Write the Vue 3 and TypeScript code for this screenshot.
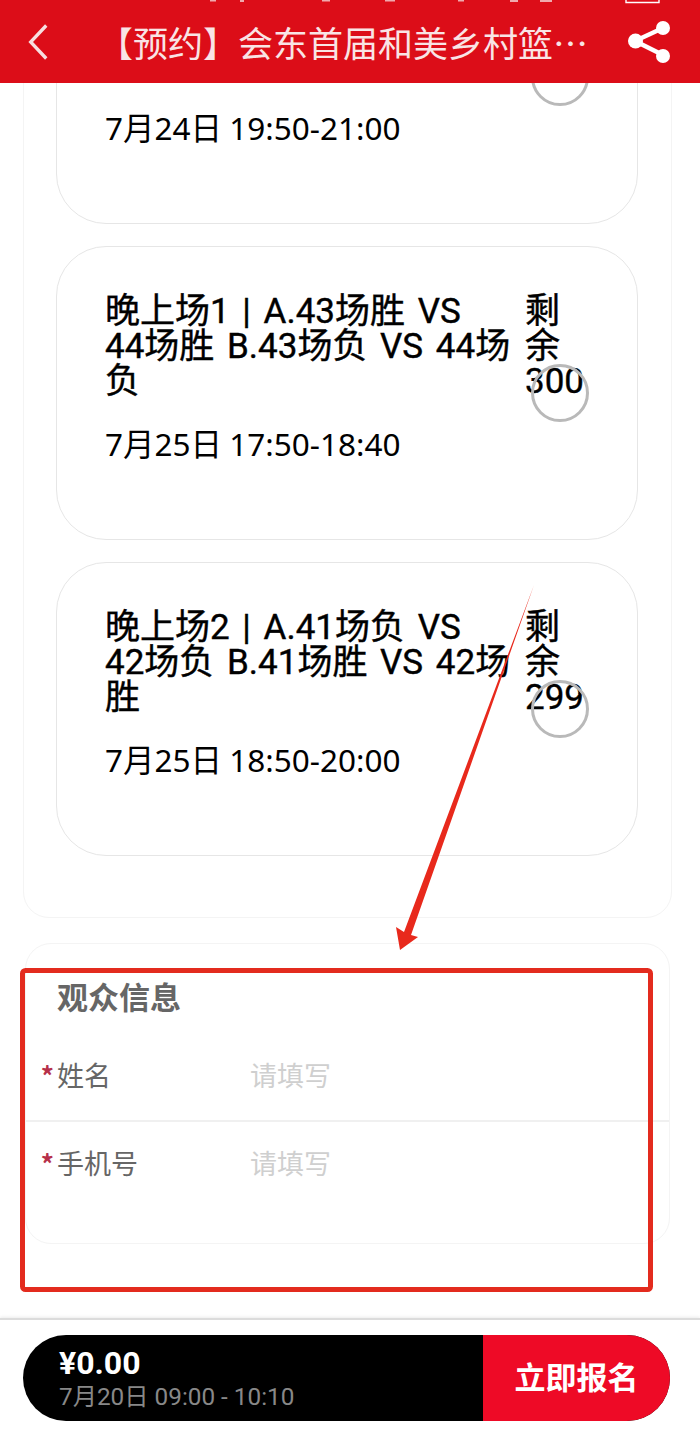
<script setup lang="ts">
interface Session {
  id: number
  title: string
  date: string
  left: string
}

const sessions: Session[] = [
  { id: 1, title: '', date: '7月24日 19:50-21:00', left: '' },
  { id: 2, title: '晚上场1 | A.43场胜 VS 44场胜 B.43场负 VS 44场负', date: '7月25日 17:50-18:40', left: '剩余300' },
  { id: 3, title: '晚上场2 | A.41场负 VS 42场负 B.41场胜 VS 42场胜', date: '7月25日 18:50-20:00', left: '剩余299' }
]

const fields = ['姓名', '手机号']
</script>

<template>
  <div class="page">
    <header class="nav">
      <svg class="status" viewBox="0 0 700 4" aria-hidden="true">
        <path d="M210 0h6v1.500h-6zM240 0h4v2h-4zM322 0h8v1.500h-8zM385 0h10v1.500h-10zM458 0h6v1.500h-6zM510 0h8v2h-8zM540 0h12v2h-12z" fill="#f0a9ad" />
        <path d="M626 0v2.500h33v-2.500" fill="none" stroke="#fff" stroke-width="1.400" />
      </svg>
      <svg class="back" viewBox="0 0 24 42" aria-hidden="true">
        <path d="M21 3 4 21l17 18" fill="none" stroke="#f7dfe0" stroke-width="3.600" />
      </svg>
      <h1 class="nav-title">【预约】会东首届和美乡村篮球赛观赛预约</h1>
      <svg class="share" viewBox="0 0 42 44" aria-hidden="true">
        <g fill="#fff" stroke="#fff">
          <path d="M35 8 7 21l28 14" fill="none" stroke-width="4.500" />
          <circle cx="35" cy="8" r="7" stroke="none" />
          <circle cx="7.500" cy="21" r="7.500" stroke="none" />
          <circle cx="35" cy="36" r="7" stroke="none" />
        </g>
      </svg>
    </header>

    <main class="content">
      <section class="sessions">
        <article v-for="s in sessions" :key="s.id" class="session">
          <div class="session-main">
            <div class="session-title">{{ s.title }}</div>
            <div class="session-date">{{ s.date }}</div>
          </div>
          <div class="session-left">{{ s.left }}</div>
          <span class="ring"></span>
        </article>
      </section>

      <section class="audience">
        <h2 class="audience-title">观众信息</h2>
        <div v-for="f in fields" :key="f" class="field">
          <span class="star">*</span>
          <span class="field-label">{{ f }}</span>
          <span class="field-input">请填写</span>
        </div>
      </section>
    </main>

    <footer class="bottom">
      <div class="bar">
        <div class="price">
          <div class="amount">¥0.00</div>
          <div class="time">7月20日 09:00 - 10:10</div>
        </div>
        <div class="action">立即报名</div>
      </div>
    </footer>

    <svg class="mark" viewBox="0 0 700 1431" aria-hidden="true">
      <polygon points="534,585 411,935 418,937 400,950 396,927 404,932" fill="#e8291c" />
      <rect x="22.500" y="970.500" width="628" height="319" rx="3" fill="none" stroke="#e32b1e" stroke-width="5" />
    </svg>
  </div>
</template>

<style>
html,
body {
  margin: 0;
  background: #fff;
}
</style>

<style scoped>
.page {
  position: relative;
  width: 700px;
  height: 1431px;
  overflow: hidden;
  background: #fff;
  font-family: "Roboto", "Noto Sans CJK SC", sans-serif;
  color: #000;
}

.nav {
  position: relative;
  z-index: 2;
  height: 83px;
  display: flex;
  align-items: center;
  padding: 0 30px 0 27px;
  box-sizing: border-box;
  background: #dc0d18;
  color: #f9e4e5;
}

.status {
  position: absolute;
  left: 0;
  top: 0;
  width: 700px;
  height: 4px;
}

.back {
  width: 22px;
  height: 40px;
  flex: none;
}

.nav-title {
  width: 494px;
  margin: 0 0 0 49px;
  font-family: "Noto Sans CJK SC", sans-serif;
  font-size: 35px;
  line-height: 42px;
  font-weight: 400;
  white-space: nowrap;
  overflow: hidden;
  text-overflow: ellipsis;
}

.share {
  width: 42px;
  height: 44px;
  flex: none;
  margin-left: auto;
}

.content {
  height: 1235px;
  overflow: hidden;
}

.sessions {
  display: flex;
  flex-direction: column;
  gap: 22px;
  box-sizing: border-box;
  width: 649px;
  margin: -184px 0 0 23px;
  padding: 30px 33px 61px 32px;
  border: 1px solid #f4f4f4;
  border-radius: 26px;
}

.session {
  position: relative;
  display: flex;
  gap: 14px;
  height: 294px;
  box-sizing: border-box;
  padding: 47px 0 0 48px;
  border: 1px solid #e6e6e6;
  border-radius: 50px;
  background: #fff;
}

.session-main {
  width: 406px;
  flex: none;
}

.session-title {
  min-height: 105px;
  font-size: 35px;
  line-height: 35px;
  font-weight: 400;
  word-spacing: 4px;
  -webkit-text-stroke: 0.4px #000;
}

.session-date {
  margin-top: 27px;
  font-family: "Noto Sans", "Noto Sans CJK SC", sans-serif;
  font-size: 31.500px;
  line-height: 36px;
  word-spacing: -1px;
}

.session-left {
  width: 34px;
  font-size: 35px;
  line-height: 35px;
  font-weight: 400;
  -webkit-text-stroke: 0.4px #000;
}

.ring {
  position: absolute;
  right: 48px;
  top: 50%;
  width: 58px;
  height: 58px;
  box-sizing: border-box;
  margin-top: -29px;
  border: 3px solid #b9b9b9;
  border-radius: 50%;
}

.audience {
  width: 645px;
  height: 301px;
  box-sizing: border-box;
  margin: 25px 0 0 25px;
  border: 1px solid #f4f4f4;
  border-radius: 26px;
  font-family: "Noto Sans CJK SC", sans-serif;
}

.audience-title {
  margin: 34px 0 0 31px;
  font-size: 31px;
  line-height: 36px;
  font-weight: 700;
  color: #666;
}

.field {
  display: flex;
  align-items: center;
  height: 81px;
  font-size: 27px;
  color: #666;
}

.field:first-of-type {
  height: 91px;
  margin-top: 15px;
  border-bottom: 2px solid #f0f0f0;
}

.star {
  width: 31px;
  padding-right: 3px;
  box-sizing: border-box;
  text-align: right;
  font-size: 26px;
  font-weight: 700;
  color: #b6304a;
}

.field-label {
  width: 193px;
}

.field-input {
  color: #cfcfcf;
}

.bottom {
  height: 113px;
  box-sizing: border-box;
  padding: 15px 30px 0 23px;
  border-top: 2px solid #dcdcdc;
  box-shadow: 0 -1px 3px rgba(0, 0, 0, 0.08);
}

.bar {
  display: flex;
  justify-content: space-between;
  height: 86px;
  border-radius: 43px;
  overflow: hidden;
  background: #000;
}

.price {
  padding: 11px 0 0 36px;
}

.amount {
  font-size: 32px;
  line-height: 34px;
  font-weight: 700;
  color: #fff;
}

.time {
  margin-top: 2px;
  font-size: 24.300px;
  line-height: 30px;
  color: #888;
}

.action {
  width: 187px;
  display: flex;
  align-items: center;
  justify-content: center;
  box-sizing: border-box;
  padding-bottom: 6px;
  background: #ee0a26;
  color: #fff;
  font-family: "Noto Sans CJK SC", sans-serif;
  font-size: 31px;
  font-weight: 700;
}

.mark {
  position: absolute;
  left: 0;
  top: 0;
  z-index: 3;
  width: 700px;
  height: 1431px;
  pointer-events: none;
}
</style>
